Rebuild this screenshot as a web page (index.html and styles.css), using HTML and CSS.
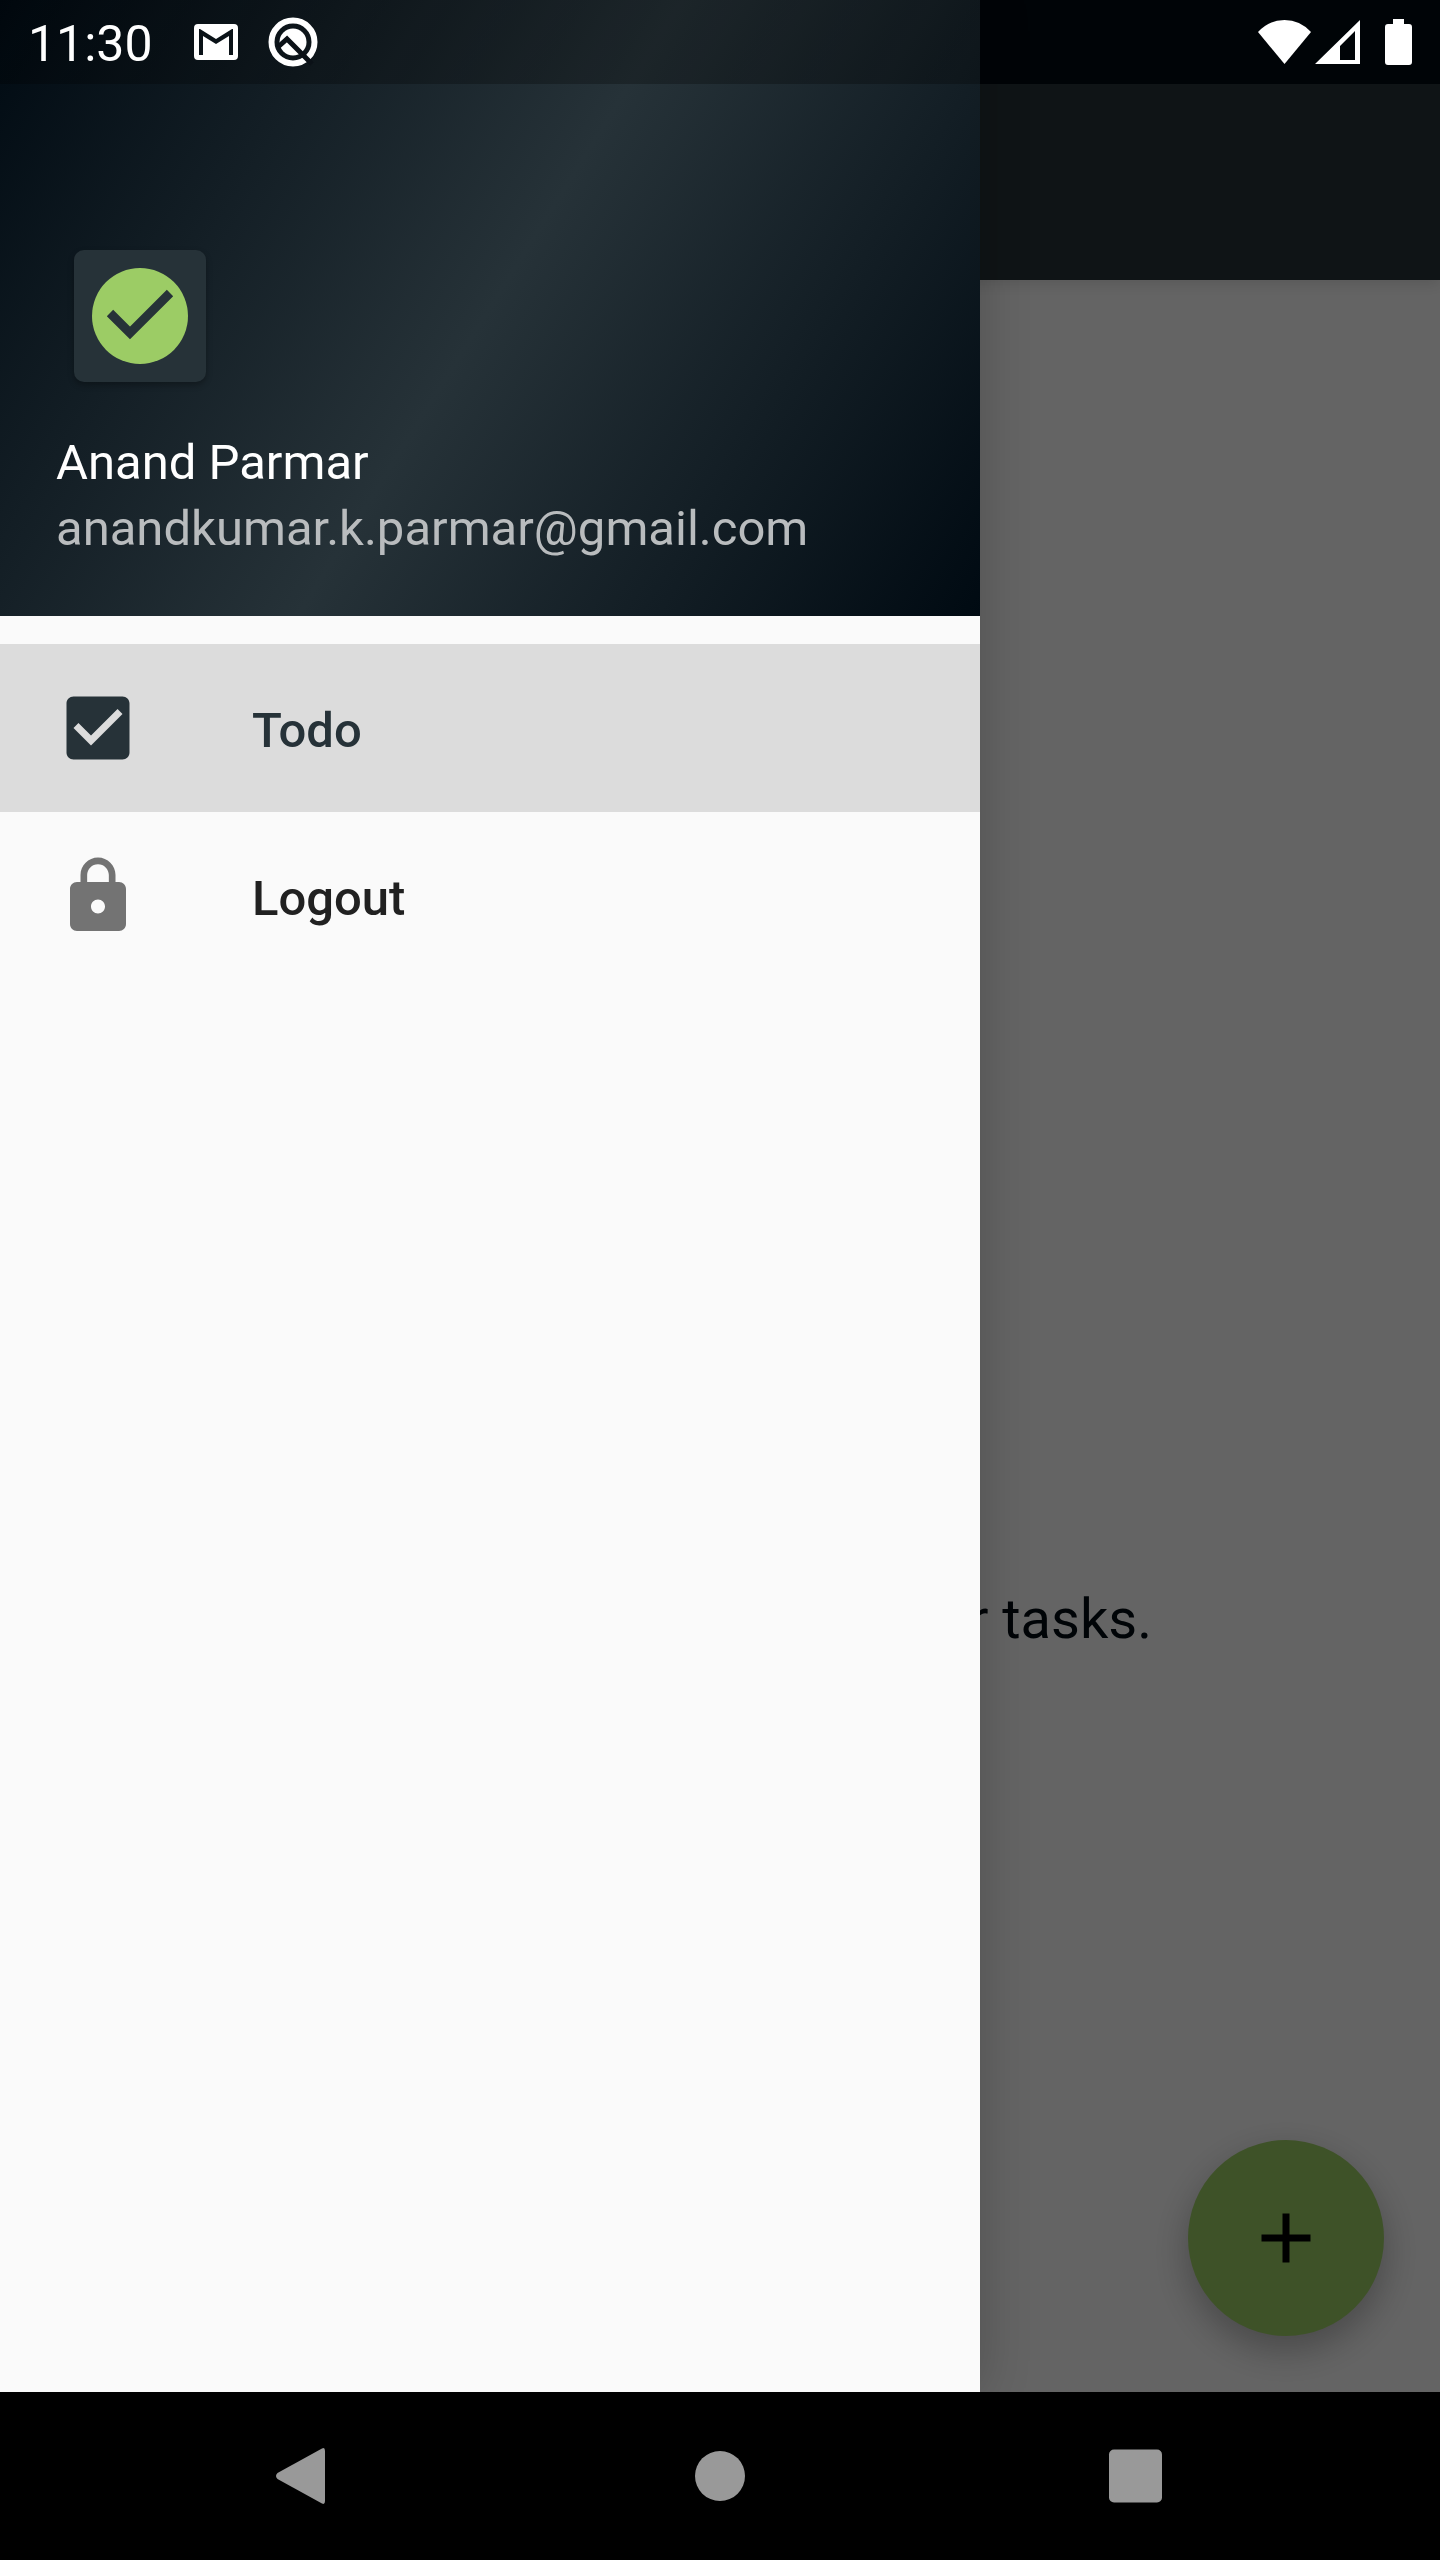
FILE: index.html
```html
<!DOCTYPE html>
<html lang="en">
<head>
<meta charset="utf-8">
<meta name="viewport" content="width=device-width, initial-scale=1">
<title>Todo</title>
<link rel="stylesheet" href="styles.css">
</head>
<body>
<div class="device">
  <div class="app">
    <main class="page">
      <header class="toolbar"></header>
      <div class="page-body">
        <p class="empty-message">your tasks.</p>
        <button class="fab" type="button" aria-label="Add task">
          <svg class="icon" viewBox="0 0 24 24" aria-hidden="true"><path d="M19 13h-6v6h-2v-6H5v-2h6V5h2v6h6v2z"/></svg>
        </button>
      </div>
    </main>
    <div class="scrim"></div>
    <aside class="drawer">
      <header class="profile">
        <div class="avatar">
          <svg viewBox="0 0 132 132" aria-hidden="true">
            <circle cx="66" cy="66" r="48" fill="#9ccc65"/>
            <path d="M36 63l20 20 40-40" fill="none" stroke="#263238" stroke-width="9"/>
          </svg>
        </div>
        <div class="name">Anand Parmar</div>
        <div class="email">anandkumar.k.parmar@gmail.com</div>
      </header>
      <nav class="menu">
        <a class="menu-item selected" href="#todo">
          <svg class="icon" viewBox="0 0 24 24" aria-hidden="true"><path d="M19 3H5c-1.110 0-2 .9-2 2v14c0 1.100.89 2 2 2h14c1.110 0 2-.9 2-2V5c0-1.100-.89-2-2-2zm-9 14l-5-5 1.410-1.410L10 14.170l7.590-7.590L19 8l-9 9z"/></svg>
          <span class="label">Todo</span>
        </a>
        <a class="menu-item" href="#logout">
          <svg class="icon" viewBox="0 0 24 24" aria-hidden="true"><path d="M18 8h-1V6c0-2.760-2.240-5-5-5S7 3.240 7 6v2H6c-1.100 0-2 .9-2 2v10c0 1.100.9 2 2 2h12c1.100 0 2-.9 2-2V10c0-1.100-.9-2-2-2zm-6 9c-1.100 0-2-.9-2-2s.9-2 2-2 2 .9 2 2-.9 2-2 2zm3.100-9H8.900V6c0-1.710 1.390-3.100 3.100-3.100s3.100 1.390 3.100 3.100v2z"/></svg>
          <span class="label">Logout</span>
        </a>
      </nav>
    </aside>
    <div class="status-bar">
      <div class="status-group">
        <time class="clock">11:30</time>
        <svg class="mail" viewBox="0 0 44 36" aria-hidden="true">
          <path fill-rule="evenodd" d="M4 0h36a4 4 0 0 1 4 4v28a4 4 0 0 1-4 4H4a4 4 0 0 1-4-4V4a4 4 0 0 1 4-4zM5 5v26h4V12l13 8 13-8v19h4V5h-1L22 15 6 5z"/>
        </svg>
        <svg class="assistant" viewBox="0 0 50 50" aria-hidden="true">
          <circle cx="25" cy="25" r="21.500" fill="none" stroke="#fff" stroke-width="6"/>
          <circle cx="25" cy="25" r="13.500"/>
          <path d="M10 30l9-8 25 25" fill="none" stroke="#0b1117" stroke-width="5"/>
        </svg>
      </div>
      <div class="status-group">
        <svg class="wifi" viewBox="0 0 53 44" aria-hidden="true"><path d="M0 12Q11 0 26.500 0T53 12L26.500 44z"/></svg>
        <svg class="signal" viewBox="0 0 45 44" aria-hidden="true"><path fill-rule="evenodd" d="M45 0v44H0zM40 11L25 26v14h15z"/></svg>
        <svg class="battery" viewBox="0 0 27 46" aria-hidden="true"><path d="M8 0h11v5h5a3 3 0 0 1 3 3v35a3 3 0 0 1-3 3H3a3 3 0 0 1-3-3V8a3 3 0 0 1 3-3h5z"/></svg>
      </div>
    </div>
  </div>
  <nav class="system-nav">
    <button type="button" aria-label="Back"><svg viewBox="0 0 56 56" aria-hidden="true"><path d="M46 0.500Q49 -1 49 3V53Q49 57 46 55.500L1.500 31Q-1.500 28 1.500 25z"/></svg></button>
    <button type="button" aria-label="Home"><svg viewBox="0 0 56 56" aria-hidden="true"><circle cx="28" cy="28" r="25"/></svg></button>
    <button type="button" aria-label="Recent apps"><svg viewBox="0 0 56 56" aria-hidden="true"><rect x="1" y="1.500" width="53" height="53" rx="5"/></svg></button>
  </nav>
</div>
</body>
</html>
```
FILE: styles.css
```css
* {
  box-sizing: border-box;
}

body {
  margin: 0;
  font-family: Roboto, sans-serif;
  font-size: 49px;
  line-height: 58px;
}

svg {
  display: block;
  fill: currentColor;
}

button {
  border: 0;
  padding: 0;
  font: inherit;
}

.icon {
  width: 84px;
  height: 84px;
  flex: none;
}

.device {
  display: flex;
  flex-direction: column;
  min-height: 100vh;
}

.app {
  position: relative;
  flex: 1;
  display: flex;
  overflow: hidden;
}

.page {
  flex: 1;
  display: flex;
  flex-direction: column;
  background: #fafafa;
}

.toolbar {
  height: 280px;
  background: linear-gradient(#000a12 84px, #263238 84px);
  box-shadow: 0 4px 14px rgba(0, 0, 0, 0.12);
}

.page-body {
  position: relative;
  flex: 1;
  display: flex;
  align-items: center;
  justify-content: flex-end;
  padding-top: 566px;
}

.empty-message {
  margin: 0;
  padding-right: 288px;
  font-size: 56px;
  line-height: 66px;
  color: #000a12;
}

.fab {
  position: absolute;
  right: 56px;
  bottom: 56px;
  display: grid;
  place-items: center;
  width: 196px;
  height: 196px;
  border-radius: 50%;
  background: #9ccc65;
  color: #000;
  box-shadow: 0 14px 36px rgba(0, 0, 0, 0.28);
}

.scrim {
  position: absolute;
  inset: 0;
  background: rgba(0, 0, 0, 0.6);
}

.drawer {
  position: absolute;
  top: 0;
  bottom: 0;
  left: 0;
  width: 980px;
  max-width: 100%;
  background: #fafafa;
  box-shadow: 0 0 48px rgba(0, 0, 0, 0.2);
}

.profile {
  display: flex;
  flex-direction: column;
  justify-content: flex-end;
  gap: 8px;
  height: 616px;
  padding: 56px 56px 58px;
  background: linear-gradient(122deg, #000a12, #263238 50%, #000a12);
}

.avatar {
  width: 132px;
  height: 132px;
  margin: 0 18px 44px;
  border-radius: 10px;
  background: #263238;
  box-shadow: 0 3px 6px rgba(0, 0, 0, 0.3);
}

.name {
  color: #fff;
}

.email {
  color: #b9bcbe;
}

.menu {
  padding-top: 28px;
}

.menu-item {
  display: flex;
  align-items: center;
  gap: 112px;
  height: 168px;
  padding: 0 56px;
  font-weight: 500;
  color: #212121;
  text-decoration: none;
}

.menu-item .icon {
  color: #737373;
}

.label {
  padding-top: 6px;
}

.selected {
  background: #dcdcdc;
}

.selected,
.selected .icon {
  color: #263238;
}

.status-bar {
  position: absolute;
  top: 0;
  left: 0;
  right: 0;
  display: flex;
  justify-content: space-between;
  align-items: center;
  height: 84px;
  padding: 0 28px;
  background: linear-gradient(90deg, rgba(0, 0, 0, 0.27) 980px, transparent 980px);
  color: #fff;
}

.status-group {
  display: flex;
  align-items: center;
}

.clock {
  padding-top: 4px;
  font-size: 50px;
}

.mail {
  width: 44px;
  height: 36px;
  margin-left: 41px;
}

.assistant {
  width: 50px;
  height: 50px;
  margin-left: 30px;
}

.wifi {
  width: 53px;
  height: 44px;
}

.signal {
  width: 45px;
  height: 44px;
  margin-left: 4px;
}

.battery {
  width: 27px;
  height: 46px;
  margin-left: 25px;
}

.system-nav {
  display: flex;
  height: 168px;
  padding: 0 96px;
  background: #000;
}

.system-nav button {
  flex: 1;
  display: grid;
  place-items: center;
  background: none;
  color: #999;
}

.system-nav svg {
  width: 56px;
  height: 56px;
}
```
